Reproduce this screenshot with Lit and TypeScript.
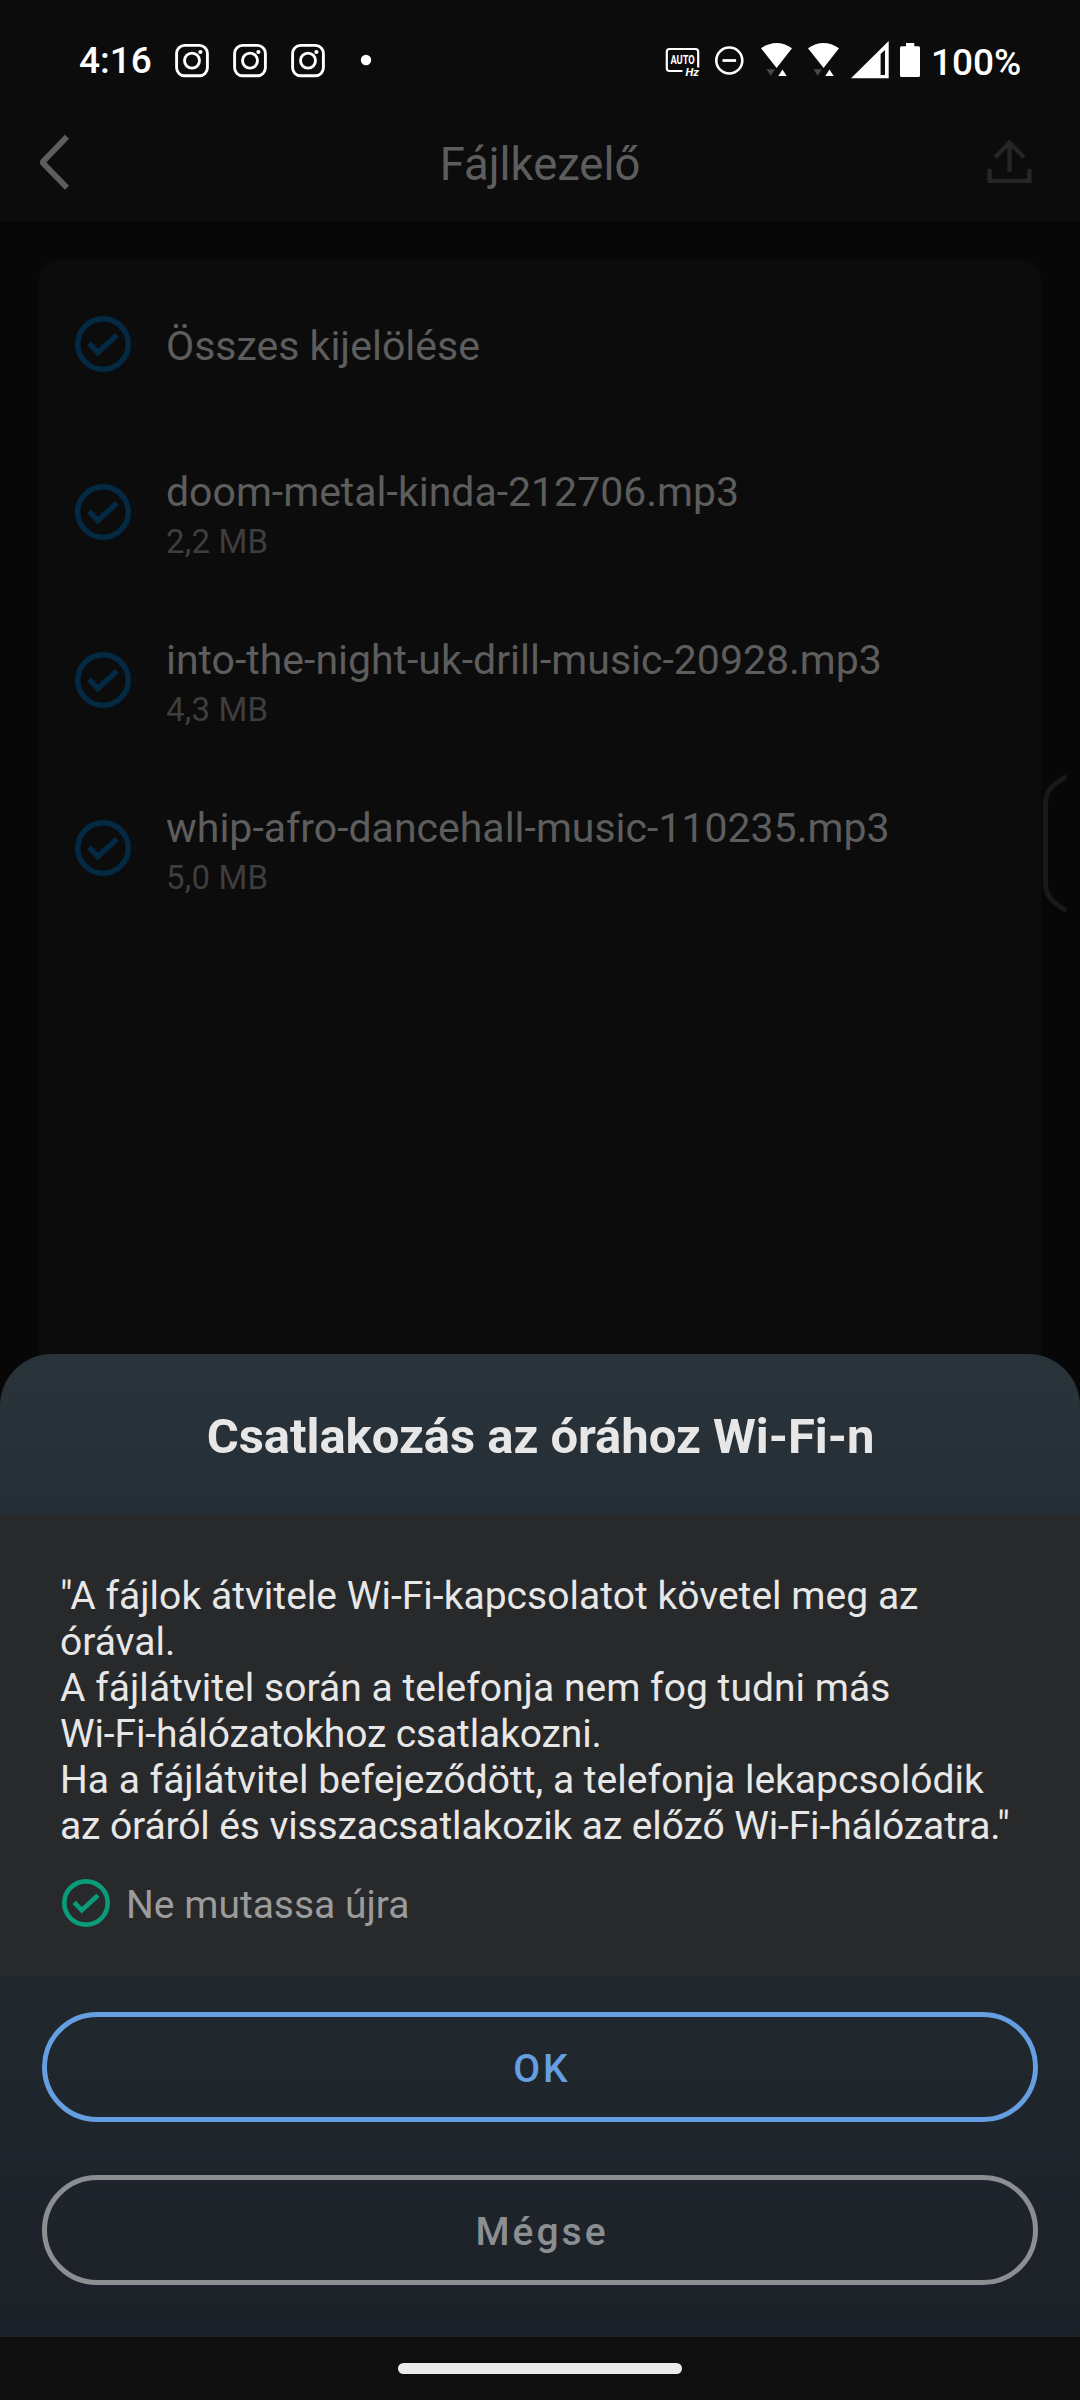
import { LitElement, html, svg, css } from "lit";
import { customElement, property } from "lit/decorators.js";
import { styleMap } from "lit/directives/style-map.js";

interface FileEntry {
  name: string;
  size: string;
}

const FILES: FileEntry[] = [
  { name: "doom-metal-kinda-212706.mp3", size: "2,2 MB" },
  { name: "into-the-night-uk-drill-music-20928.mp3", size: "4,3 MB" },
  { name: "whip-afro-dancehall-music-110235.mp3", size: "5,0 MB" },
];

// Each message line with its tracking in pixels.
const MESSAGE: [string, number][] = [
  ['"A fájlok átvitele Wi-Fi-kapcsolatot követel meg az', 0.03],
  ["órával.", 0],
  ["A fájlátvitel során a telefonja nem fog tudni más", 0.03],
  ["Wi-Fi-hálózatokhoz csatlakozni.", -0.13],
  ["Ha a fájlátvitel befejeződött, a telefonja lekapcsolódik", 0],
  ['az óráról és visszacsatlakozik az előző Wi-Fi-hálózatra."', -0.11],
];

@customElement("check-mark")
export class CheckMark extends LitElement {
  static styles = css`
    :host {
      display: block;
      flex: none;
    }
    svg {
      display: block;
      width: 100%;
      height: 100%;
    }
  `;
  render() {
    return html`<svg viewBox="0 0 56 56" fill="none" stroke="currentColor" stroke-width="5.4">
      <circle cx="28" cy="28" r="25.3"></circle>
      <path d="M14.2 27.4L23 36.4L42 19"></path>
    </svg>`;
  }
}

@customElement("status-bar")
export class StatusBar extends LitElement {
  static styles = css`
    :host {
      display: flex;
      justify-content: space-between;
      height: 104px;
      color: #fff;
      font-size: 37px;
    }
    .side {
      display: flex;
      align-items: flex-start;
    }
    .left {
      padding-left: 79px;
    }
    .right {
      padding-right: 59px;
    }
    .time {
      width: 87px;
      font-weight: 500;
      line-height: 44px;
      padding-top: 39px;
      white-space: nowrap;
    }
    .level {
      width: 90px;
      font-weight: 500;
      line-height: 44px;
      padding-top: 41px;
      white-space: nowrap;
    }
    svg {
      display: block;
      flex: none;
    }
  `;

  private camera(x: number) {
    return svg`<g transform="translate(${x} 0)">
      <rect x="10.6" y="45.4" width="30.8" height="30.4" rx="8"></rect>
      <circle cx="26" cy="60.6" r="7.5"></circle>
      <circle cx="34.4" cy="52" r="2.1" fill="#fff" stroke="none"></circle>
    </g>`;
  }

  private wifi(x: number) {
    return svg`<g transform="translate(${x} 0)">
      <path d="M0 48.2Q15.5 37.8 31 48.2L15.6 68Z" fill="#fff"></path>
      <path d="M5.5 69.3h8.4l-4.2 6.4z" fill="#484848"></path>
      <path d="M17.3 76h8.4l-4.2-6.6z" fill="#fff"></path>
    </g>`;
  }

  render() {
    return html`
      <div class="side left">
        <span class="time">4:16</span>
        <svg width="220" height="104" viewBox="0 0 220 104" fill="none" stroke="#fff" stroke-width="2.9">
          ${[0, 58, 116].map((x) => this.camera(x))}
          <circle cx="200" cy="60" r="5.2" fill="#fff" stroke="none"></circle>
        </svg>
      </div>
      <div class="side right">
        <svg width="271" height="104" viewBox="660 0 271 104">
          <path d="M682.5 71H669.5Q666.8 71 666.8 68.300V51.700Q666.8 49 669.5 49H695.500Q698.200 49 698.200 51.700V67.500"
            fill="none" stroke="#fff" stroke-width="2.2"></path>
          <text x="670.4" y="64.2" fill="#fff" font-size="12.2" font-weight="700" textLength="24.400"
            lengthAdjust="spacingAndGlyphs">AUTO</text>
          <text x="685.400" y="76.400" fill="#fff" font-size="11.500" font-weight="700" font-style="italic"
            textLength="13.500" lengthAdjust="spacingAndGlyphs">Hz</text>
          <circle cx="729.300" cy="60.500" r="13" fill="none" stroke="#fff" stroke-width="2.600"></circle>
          <path d="M722.500 60.500h13.600" stroke="#fff" stroke-width="2.800"></path>
          ${this.wifi(761)} ${this.wifi(808)}
          <path d="M888.700 41V78.300H851Z M880.600 54L885 50V75H880.600Z" fill="#fff" fill-rule="evenodd"></path>
          <path d="M906 43h8.300v3.200h4.200q1.500 0 1.500 1.500v27.800q0 1.500-1.500 1.500h-17q-1.500 0-1.500-1.500v-27.800q0-1.500 1.500-1.500h4.500z"
            fill="#fff"></path>
        </svg>
        <span class="level">100%</span>
      </div>
    `;
  }
}

@customElement("file-row")
export class FileRow extends LitElement {
  @property() name = "";
  @property() size = "";

  static styles = css`
    :host {
      display: flex;
      height: 168px;
      gap: 35px;
      padding-left: 36px;
    }
    check-mark {
      width: 56px;
      height: 56px;
      margin-top: 56px;
      color: #032945;
    }
    .texts {
      display: flex;
      flex-direction: column;
      padding-top: 36px;
      white-space: nowrap;
    }
    .single {
      padding-top: 58px;
    }
    .name {
      font-size: 41px;
      line-height: 56px;
      color: #5d5d5d;
    }
    .size {
      font-size: 33px;
      line-height: 44px;
      letter-spacing: 0.2px;
      color: #3e3e3e;
    }
  `;

  render() {
    return html`
      <check-mark></check-mark>
      <div class="texts ${this.size ? "" : "single"}">
        <span class="name">${this.name}</span>
        ${this.size ? html`<span class="size">${this.size}</span>` : ""}
      </div>
    `;
  }
}

@customElement("wifi-sheet")
export class WifiSheet extends LitElement {
  static styles = css`
    :host {
      display: flex;
      flex-direction: column;
      height: 983px;
      border-radius: 52px 52px 0 0;
      overflow: hidden;
      background: linear-gradient(#29343a, #262e35 16%, #20282e 64%, #1d2129);
    }
    .title {
      height: 160px;
      box-sizing: border-box;
      padding: 53px 0 0 1px;
      text-align: center;
      font-size: 49px;
      line-height: 60px;
      font-weight: 700;
      letter-spacing: -0.05px;
      color: #e7e7e7;
    }
    .body {
      height: 462px;
      box-sizing: border-box;
      padding: 59px 0 0 60px;
      background: #28292b;
    }
    .message {
      font-size: 39px;
      line-height: 46px;
      color: #e7e7e7;
      white-space: nowrap;
    }
    .line {
      display: block;
    }
    .again {
      display: flex;
      gap: 16px;
      padding: 30px 0 0 2px;
      font-size: 39px;
      line-height: 52px;
      color: #9b9b9b;
    }
    .again check-mark {
      width: 48px;
      height: 48px;
      color: #089c79;
    }
    .actions {
      display: flex;
      flex-direction: column;
      gap: 53px;
      padding: 36px 42px 0;
    }
    .btn {
      box-sizing: border-box;
      height: 110px;
      border: 5px solid currentColor;
      border-radius: 55px;
      background: none;
      padding: 4px 0 0 4px;
      font: 500 39px/46px Roboto, sans-serif;
      letter-spacing: 3px;
      text-align: center;
    }
    .ok {
      color: #659fe2;
    }
    .cancel {
      color: #8c8f91;
    }
  `;

  render() {
    return html`
      <div class="title">Csatlakozás az órához Wi-Fi-n</div>
      <div class="body">
        <div class="message">
          ${MESSAGE.map(
            ([text, tracking]) =>
              html`<span class="line" style=${styleMap({ letterSpacing: `${tracking}px` })}>${text}</span>`
          )}
        </div>
        <div class="again"><check-mark></check-mark><span>Ne mutassa újra</span></div>
      </div>
      <div class="actions">
        <button class="btn ok">OK</button>
        <button class="btn cancel">Mégse</button>
      </div>
    `;
  }
}

@customElement("app-root")
export class AppRoot extends LitElement {
  static styles = css`
    :host {
      display: flex;
      flex-direction: column;
      position: relative;
      width: 1080px;
      height: 2400px;
      overflow: hidden;
      background: #070707;
      font-family: Roboto, "Noto Sans", sans-serif;
    }
    .top {
      height: 221px;
      background: #0c0c0c;
    }
    .bar {
      display: grid;
      grid-template-columns: 110px 1fr 110px;
      height: 117px;
    }
    .bar svg {
      display: block;
    }
    .heading {
      text-align: center;
      font-size: 45.4px;
      line-height: 56px;
      padding-top: 33px;
      color: #5d5d5d;
    }
    .card {
      flex: 1;
      margin: 39px 39px 0;
      border-radius: 18px 18px 0 0;
      background: #0c0c0c;
    }
    .handle {
      position: absolute;
      left: 1040px;
      top: 770px;
    }
    .overlay {
      position: absolute;
      left: 0;
      right: 0;
      bottom: 0;
    }
    .nav {
      display: flex;
      justify-content: center;
      height: 63px;
      background: #0f0f0f;
    }
    .pill {
      width: 284px;
      height: 11px;
      margin-top: 26px;
      border-radius: 6px;
      background: #ebebeb;
    }
  `;

  render() {
    return html`
      <div class="top">
        <status-bar></status-bar>
        <div class="bar">
          <svg width="110" height="117" viewBox="0 104 110 117" fill="none" stroke="#5d5d5d" stroke-width="5.8">
            <path d="M67 136.800L43.200 161.400Q42.400 162.400 43.200 163.300L67 187.700"></path>
          </svg>
          <div class="heading">Fájlkezelő</div>
          <svg width="110" height="117" viewBox="970 104 110 117" fill="none" stroke="#262626" stroke-width="4.300">
            <path d="M989.600 169V180.900H1029.400V169M1009.500 171.800V143M995.200 157.200L1009.500 142.600L1023.800 157.200"></path>
          </svg>
        </div>
      </div>
      <div class="card">
        <file-row name="Összes kijelölése"></file-row>
        ${FILES.map((f) => html`<file-row name=${f.name} size=${f.size}></file-row>`)}
      </div>
      <svg class="handle" width="40" height="150" viewBox="1040 770 40 150" fill="none" stroke="#191919"
        stroke-width="5" stroke-linecap="round">
        <path d="M1064.200 777.500L1055 784Q1045.500 791 1045.500 804V883Q1045.500 896 1055 903L1064.200 909.500"></path>
      </svg>
      <div class="overlay">
        <wifi-sheet></wifi-sheet>
        <div class="nav"><div class="pill"></div></div>
      </div>
    `;
  }
}
